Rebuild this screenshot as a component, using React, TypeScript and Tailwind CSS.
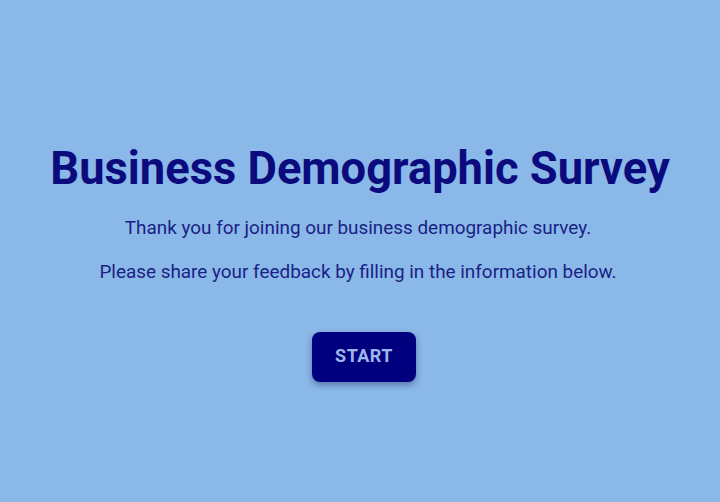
const App = () => {
  return (
    <div
      className="min-h-[502px] w-full bg-[#8ab8e8] flex flex-col items-center pt-[143px] text-center"
      style={{ fontFamily: "Roboto, 'Liberation Sans', sans-serif" }}
    >
      <h1 className="text-[45.3px] leading-[52px] font-bold text-[#0b0b7e]">
        Business Demographic Survey
      </h1>
      <p className="mt-[21px] mr-[4px] text-[18.9px] leading-[24px] text-[#1a1f86]">
        Thank you for joining our business demographic survey.
      </p>
      <p className="mt-[20px] mr-[4px] text-[18.9px] leading-[24px] text-[#1a1f86]">
        Please share your feedback by filling in the information below.
      </p>
      <button className="mt-[48px] ml-[8px] w-[104px] h-[50px] pb-[4px] rounded-lg bg-[#00007f] text-[#9fb6ea] text-[18px] font-bold tracking-wide shadow-[0_3px_6px_rgba(0,0,60,0.35)]">
        START
      </button>
    </div>
  );
};

export default App;
